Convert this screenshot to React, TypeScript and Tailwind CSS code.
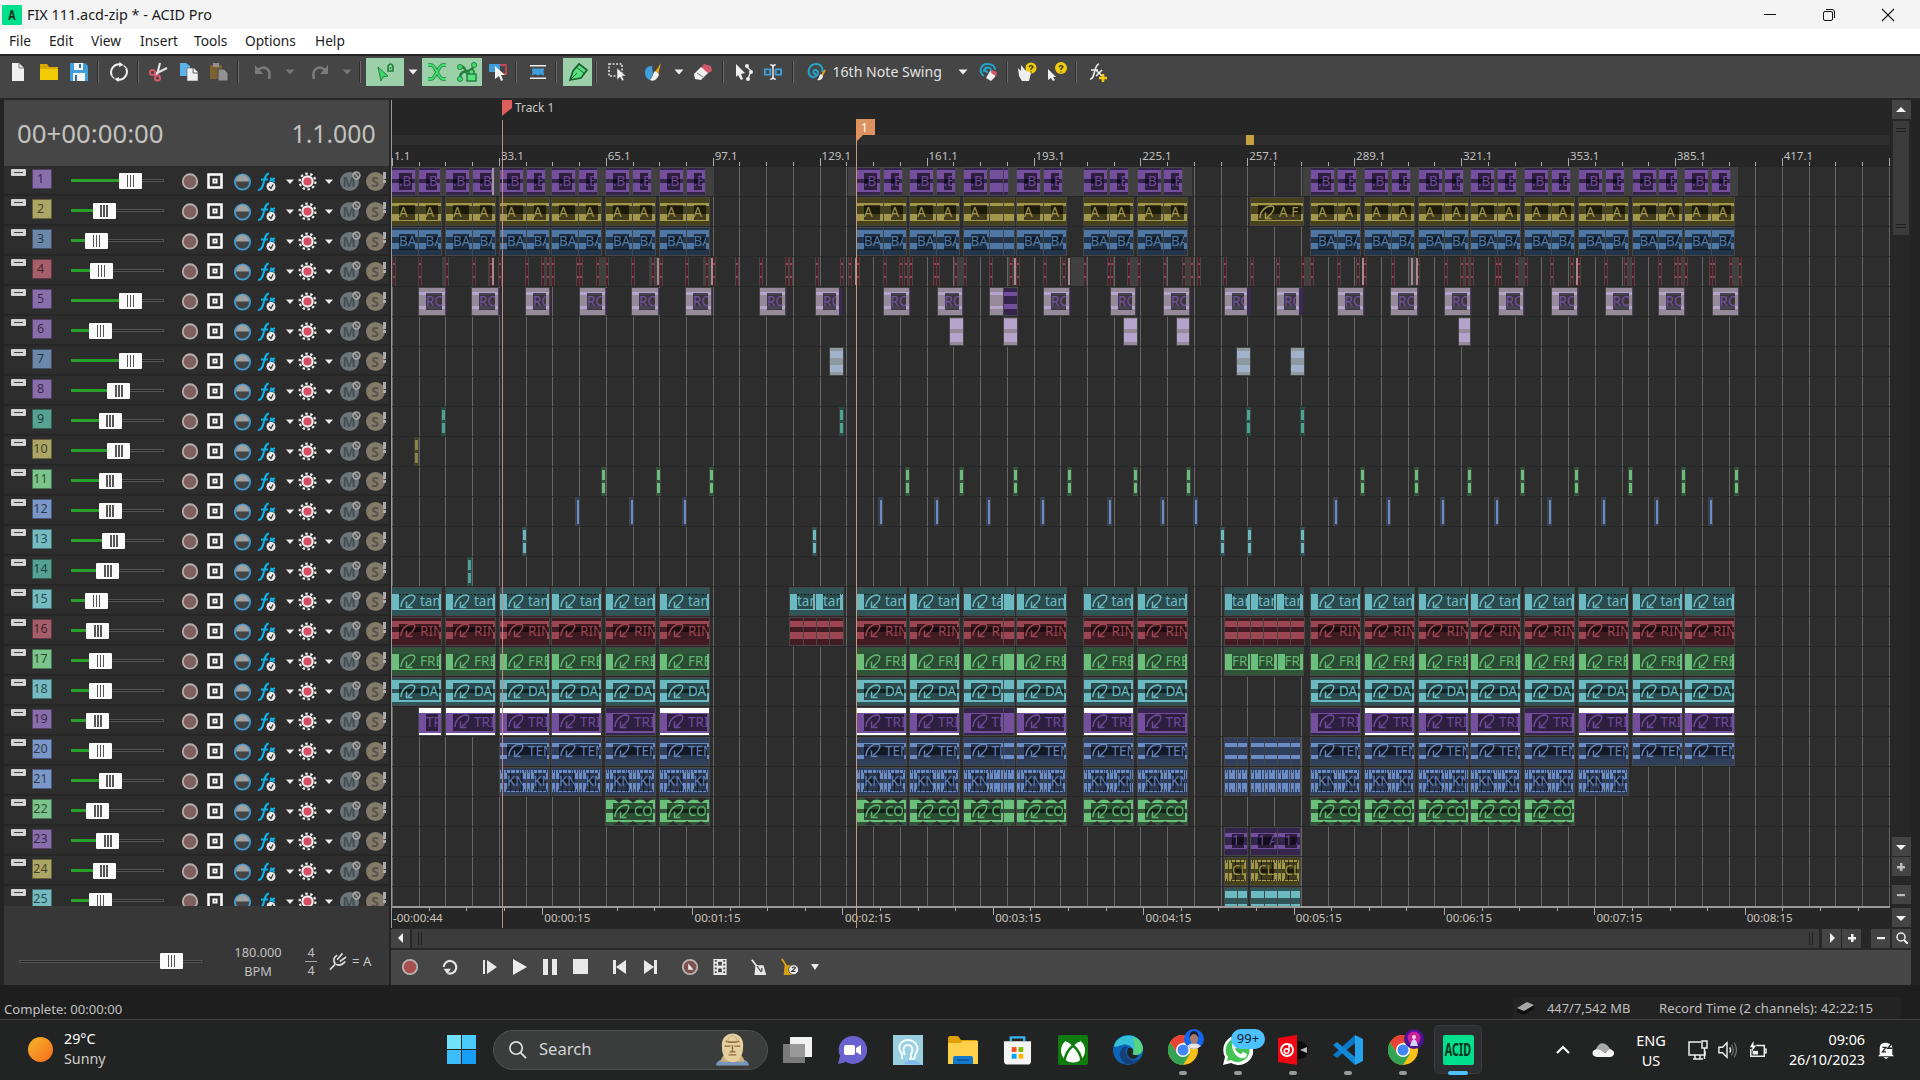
import React from "react";

type StripItem = { x: number; w: number; n: React.ReactNode };

/** Lays items out in one flex row; x values are positions along the row. */
function Strip({ items, className = "", start = 0 }: { items: StripItem[]; className?: string; start?: number }) {
  let end = start;
  return (
    <div className={"flex items-center " + className}>
      {items.map((it, i) => {
        const m = it.x - end;
        end = it.x + it.w;
        return (
          <div key={i} className="flex shrink-0 items-center justify-center" style={{ marginLeft: m, width: it.w }}>
            {it.n}
          </div>
        );
      })}
    </div>
  );
}

function Svg({ w = 20, h = 20, vb, children }: { w?: number; h?: number; vb?: string; children: React.ReactNode }) {
  return (
    <svg width={w} height={h} viewBox={vb ?? "0 0 20 20"} fill="none" className="shrink-0">
      {children}
    </svg>
  );
}

const at = (c: number, w: number, n: React.ReactNode): StripItem => ({ x: c - w / 2, w, n });

const Sep = () => <div className="h-[22px] w-[2px] border-l border-[#2c2c2c] bg-[#6a6a6a]" />;
const Down = ({ dim = false }: { dim?: boolean }) => (
  <Svg w={10} h={6} vb="0 0 10 6">
    <path d="M.5 .5h9L5 5.5z" fill={dim ? "#777" : "#eee"} />
  </Svg>
);

const toolbar: StripItem[] = [
  at(18, 20, <Svg><path d="M4 1h7l5 5v13H4z" fill="#f0f0f0" /><path d="M11 1v5h5" stroke="#777" /></Svg>),
  at(49, 20, <Svg><path d="M1 2h7l2 3h9v13H1z" fill="#d9a900" /><path d="M1 7h18v11H1z" fill="#f2cb05" /></Svg>),
  at(79, 20, <Svg><path d="M1 1h15l3 3v15H1z" fill="#3f9fdc" /><path d="M5 1h9v7H5zM4 11h12v8H4z" fill="#f4f4f4" /><path d="M10 2h2v4h-2zM6 13h2v6H6z" fill="#2c6fa0" /></Svg>),
  at(98, 2, <Sep />),
  at(119, 20, <Svg><path d="M2.800 13.500A8 8 0 0 1 12 2.500M17.200 6.500A8 8 0 0 1 8 17.500" stroke="#f0f0f0" strokeWidth="2" /><path d="M14.500 3.500a8 8 0 0 1 3 3M5.500 16.500a8 8 0 0 1-3-3" stroke="#f0f0f0" strokeWidth="1.400" /><path d="M10.500 0l4 3-4.500 2zM9.500 20l-4-3 4.500-2z" fill="#f0f0f0" /></Svg>),
  at(138, 2, <Sep />),
  at(158, 20, <Svg><path d="M12 1L9 13M19 6L7 12" stroke="#e4e4e4" strokeWidth="2.200" /><circle cx="4.500" cy="10.500" r="2.600" stroke="#d5596a" strokeWidth="2" /><circle cx="9.500" cy="16" r="2.600" stroke="#d5596a" strokeWidth="2" /></Svg>),
  at(189, 20, <Svg><path d="M1 1h6l4 3v10H1z" fill="#5bb3ea" /><path d="M8 6h7l4 4v9H8z" fill="#f0f0f0" stroke="#555" strokeWidth=".6" /><path d="M14 6v5h5" stroke="#666" /></Svg>),
  at(219, 20, <Svg><path d="M1 3h12v14H1z" fill="#7b6230" /><path d="M4 1h6v4H4z" fill="#909090" /><path d="M9 7h6l4 4v8H9z" fill="#929292" stroke="#454545" /></Svg>),
  at(238, 2, <Sep />),
  at(264, 20, <Svg><path d="M4 8c5-5 14-2 11 9" stroke="#7b7b7b" strokeWidth="2.600" /><path d="M1 3v9h8z" fill="#7b7b7b" /></Svg>),
  at(290, 12, <Down dim />),
  at(319, 20, <Svg><path d="M16 8C11 3 2 6 5 17" stroke="#7b7b7b" strokeWidth="2.600" /><path d="M19 3v9h-8z" fill="#7b7b7b" /></Svg>),
  at(347, 12, <Down dim />),
  at(360, 2, <Sep />),
  at(385, 38, <div className="flex h-[28px] w-full items-center justify-center bg-[#9bd0a8]"><Svg w={22}><path d="M3 5l10 9-5 1-2 4z" fill="#3fd66a" stroke="#23803d" /><path d="M13 9V4q2.500-4 5 0v5zM15.500 5v2" stroke="#23803d" strokeWidth="1.600" /></Svg></div>),
  at(413, 12, <Down />),
  at(452, 60, <div className="flex h-[28px] w-full items-center justify-around bg-[#9bd0a8]">
    <Svg w={22}><path d="M1 3h3c5 0 7 14 12 14h3M1 17h3c5 0 7-14 12-14h3" stroke="#23803d" strokeWidth="3.600" /><path d="M1 3h3c5 0 7 14 12 14h3M1 17h3c5 0 7-14 12-14h3" stroke="#3fe070" strokeWidth="1.800" /></Svg>
    <Svg w={22}><path d="M3 17C3 4 14 14 17 3M3 5c5-3 6 8 9 8" stroke="#23803d" strokeWidth="2.500" /><circle cx="3" cy="5" r="2.500" fill="#3fe070" stroke="#23803d" /><circle cx="17" cy="3" r="2.500" fill="#3fe070" stroke="#23803d" /><circle cx="3" cy="17" r="2.500" fill="#3fe070" stroke="#23803d" /><path d="M10 12h9v7h-9zM12 12V9q2.500-3 5 0v3" fill="#5be080" stroke="#23803d" strokeWidth="1.500" /></Svg>
  </div>),
  at(498, 20, <Svg><path d="M1 2h11v8H1z" fill="#3f9fdc" /><path d="M12 3h6v9h-7" stroke="#c04858" strokeWidth="1.800" /><path d="M7 4l10 9h-4l2 5-2 1-2-5-4 3z" fill="#f4f4f4" /></Svg>),
  at(516, 2, <Sep />),
  at(538, 18, <Svg w={18} h={18}><path d="M1 3h18M1 17h18" stroke="#eee" strokeWidth="1.800" /><path d="M3 6h14l-1 4 1 4-4-1.500-3 1.500-3-1.500L3 14l1-4z" fill="#3f9fdc" /></Svg>),
  at(556, 2, <Sep />),
  at(577.5, 29, <div className="flex h-[28px] w-full items-center justify-center bg-[#9bd0a8]"><Svg><path d="M2 18l3-9 6-7 8 6-6 8z" fill="#5be080" stroke="#17602d" strokeWidth="1.700" /><path d="M2 18l7-7M8 5l8 6" stroke="#17602d" /></Svg></div>),
  at(596, 2, <Sep />),
  at(617, 20, <Svg><path d="M2 2h13v12H2z" stroke="#ddd" strokeWidth="1.600" strokeDasharray="2 1.500" /><path d="M10 6l9 8h-4l2 4-2 1-2-4-3 3z" fill="#f4f4f4" stroke="#454545" strokeWidth=".5" /></Svg>),
  at(653, 20, <Svg><path d="M9 4c-9-1-9 12-2 14l3-6" fill="#3f9fdc" /><path d="M18 1l-3 12-3-3z" fill="#e0a21c" /><path d="M12 9l4 3c-1 5-5 8-9 6 3-3 3-7 5-9z" fill="#f0f0f0" /></Svg>),
  at(679, 12, <Down />),
  at(703, 20, <Svg><path d="M11 2l7 2 1 5-6 3-5-6z" fill="#d5596a" /><path d="M8 5l7 6-7 7-6-1-1-5z" fill="#f0f0f0" /><path d="M4 11l6 4" stroke="#777" /></Svg>),
  at(723, 2, <Sep />),
  at(744, 20, <Svg><path d="M2 2l9 9-4 1 2 5-2 1-3-5-2 2z" fill="#f0f0f0" /><path d="M12 4l5 5-3 8" stroke="#eee" strokeWidth="1.400" /><circle cx="13" cy="4" r="2" fill="#eee" /><circle cx="17" cy="10" r="2" fill="#eee" /><circle cx="14" cy="17" r="2" fill="#eee" /></Svg>),
  at(773, 18, <Svg w={18}><path d="M1 7h6v6H1zM13 7h6v6h-6z" stroke="#3f9fdc" strokeWidth="2" /><path d="M7 2q3 0 3 3 0-3 3-3M7 18q3 0 3-3 0 3 3 3M10 5v10" stroke="#eee" strokeWidth="1.600" /></Svg>),
  at(793, 2, <Sep />),
  at(817, 20, <Svg><path d="M9 12c-4 0-3-5 0-4 5 2 0 8-4 7C-1 12 2 2 9 2c6 0 7 5 6 8" stroke="#25a5cc" strokeWidth="2" /><path d="M18 8l-4 7" stroke="#e0a21c" strokeWidth="2" /><path d="M14 12l2 2c0 3-3 5-6 4 2-1 2-5 4-6z" fill="#eee" /></Svg>),
  { x: 832.5, w: 110, n: <span className="w-full whitespace-nowrap text-[14.100px] text-[#e2e2e2]">16th Note Swing</span> },
  at(963, 12, <Down />),
  at(988, 20, <Svg><path d="M10 10c-4 0-3-5 0-4M6 14C0 10 3 2 9 2c6 0 8 3 8 6M6 10c-1-6 8-6 7-1" stroke="#25a5cc" strokeWidth="1.900" /><path d="M12 9l6 2-1 4-4 4-5-3z" fill="#eee" /><path d="M14 8l5 2-1 4-5-3z" fill="#d5596a" /></Svg>),
  at(1006.5, 2, <Sep />),
  at(1027, 22, <Svg w={22}><circle cx="14" cy="6" r="5.500" fill="#f0cc10" /><path d="M12 5q2-3 4 0l-2 2v1M14 9.500v1" stroke="#4a4000" strokeWidth="1.500" /><path d="M1 6l3 3V3l4 5 6 3-2 8H5l-3-5z" fill="#eee" /></Svg>),
  at(1057, 22, <Svg w={22}><circle cx="14" cy="6" r="6" fill="#f0cc10" /><path d="M12 5q2-3 4 0l-2 2v1M14 9.500v1" stroke="#4a4000" strokeWidth="1.500" /><path d="M1 7l8 8H6l2 3-2 1-2-3-3 2z" fill="#eee" /></Svg>),
  at(1076, 2, <Sep />),
  at(1098, 20, <Svg><path d="M2 17c5 1 4-15 9-15M3 8h7M8 8l6 6M14 8l-6 6" stroke="#eee" strokeWidth="1.600" /><path d="M15 12v8M11 16h8" stroke="#f0cc10" strokeWidth="2.600" /></Svg>),
];

type Hue = { dark: string; bright: string; text: string };
const H: Record<string, Hue> = {
  purple: { dark: "#35244c", bright: "#744f9e", text: "#6d4b98" },
  yellow: { dark: "#47421c", bright: "#a0974a", text: "#a0974a" },
  blue: { dark: "#22354b", bright: "#4f77a3", text: "#4f77a3" },
  cyan: { dark: "#2f5558", bright: "#6bbac1", text: "#6bbac1" },
  red: { dark: "#431c23", bright: "#9c4553", text: "#9c4553" },
  green: { dark: "#305538", bright: "#6abf7b", text: "#62b573" },
  indigo: { dark: "#303f5b", bright: "#6b8bc4", text: "#6482b8" },
  lilac: { dark: "#95899a", bright: "#b5a3cb", text: "#7453a2" },
};

type ClipStyle = { hue: Hue; bands: [number, number][]; box: [number, number]; look?: "spiky" | "zigzag" | "dashed" };
const S: Record<string, ClipStyle> = {
  t1: { hue: H.purple, bands: [[4, 13], [17, 26]], box: [7, 24] },
  t2: { hue: H.yellow, bands: [[6.5, 10], [18, 24.5]], box: [9, 24] },
  t3: { hue: H.blue, bands: [[4, 10.5], [16.5, 23]], box: [8, 23.5] },
  t5: { hue: H.lilac, bands: [[6, 9], [20, 23]], box: [7, 23.5] },
  t15: { hue: H.cyan, bands: [[8, 24]], box: [8, 23], look: "dashed" },
  t16: { hue: H.red, bands: [[4.5, 11], [16, 23]], box: [7.5, 23] },
  t17: { hue: H.green, bands: [[8, 24]], box: [8, 23] },
  t18: { hue: H.cyan, bands: [[4, 12.5], [16.5, 25.5]], box: [7, 24] },
  t19: { hue: H.purple, bands: [[7, 26.5]], box: [8, 24.5] },
  t20: { hue: H.indigo, bands: [[7, 10.5], [19, 23]], box: [8, 22.5] },
  t21: { hue: H.indigo, bands: [[4, 13], [16.5, 25.5]], box: [7, 25], look: "spiky" },
  t22: { hue: H.green, bands: [[4, 12.5], [16.5, 25.5]], box: [7, 24], look: "zigzag" },
  t23: { hue: H.purple, bands: [[6.5, 10.5], [19, 23]], box: [8, 22] },
  t24: { hue: H.yellow, bands: [[4, 12.5], [17, 25]], box: [6, 24], look: "spiky" },
  t25: { hue: H.cyan, bands: [[5, 12], [17.5, 25]], box: [8, 23] },
};

const ORIGIN = 392;

function Clip({ x, w, s, label, loop, selected }: { x: number; w: number; s: ClipStyle; label?: string; loop?: boolean; selected?: boolean }) {
  const { hue } = s;
  return (
    <div className="absolute top-[1px] h-[29px] overflow-hidden border border-[#464646]" style={{ left: x - ORIGIN - 1, width: w + 2 }}>
      <svg width={w} height={27} viewBox={`0 2 ${w} 27`} className="absolute inset-0" shapeRendering="crispEdges">
        <rect x={0} y={2} width={w} height={27} fill={selected ? "#ffffff" : hue.dark} />
        {s.bands.map(([a, b], i) => (
          <rect key={i} x={0} y={a} width={w} height={b - a} fill={hue.bright} />
        ))}
        {s.look === "dashed" && <path d={`M7 8.500H${w}`} stroke="#10292b" strokeDasharray="1.500 2" />}
        {s.look === "spiky" && (
          <>
            <path d={`M1 5.500H${w}M1 24H${w}`} stroke={hue.dark} strokeWidth={3} strokeDasharray="1 4 1 3" />
            <path d={`M3 8.500H${w}M3 21H${w}`} stroke={hue.dark} strokeWidth={9} strokeDasharray="1 6 1 10" />
          </>
        )}
        {s.look === "zigzag" &&
          Array.from({ length: Math.ceil(w / 14) }, (_, i) => (
            <g key={i} shapeRendering="auto">
              <path d={`M${i * 14 + 8} 2h12l-6 5z`} fill="#2d2d2d" transform="translate(-1 0)" />
              <path d={`M${i * 14 + 7} 29l6-4 6 4z`} fill="#2d2d2d" />
            </g>
          ))}
      </svg>
      {label && (
        <div
          className="absolute left-[7px] flex items-center overflow-hidden bg-black/60"
          style={{ top: s.box[0] - 2, height: s.box[1] - s.box[0], right: loop ? 2 : 3 }}
        >
          {loop && (
            <svg width={19} height={16} viewBox="0 0 19 16" fill="none" className="shrink-0">
              <path d="M2 13C2 6 8 1 13 1c5 .5 3 6-4 11.500M7.500 7.500v6h6" stroke={hue.text} strokeWidth={1.500} />
            </svg>
          )}
          <span className={"whitespace-nowrap text-[13.500px] leading-none " + (loop ? "pl-[2px]" : "")} style={{ color: hue.text }}>
            {label}
          </span>
        </div>
      )}
    </div>
  );
}

const A = [392, 446, 500, 552, 606, 660];
const B = [857, 910, 963.5, 1017, 1083.5, 1137.5];
const C = [1311, 1365, 1418.5, 1471, 1525, 1579, 1632.5, 1685];

/** Long looped clips, one per sixteen-bar section. */
function Loops({ s, label, from = A, to = C, bare = [], narrow = false }: { s: ClipStyle; label: string; from?: number[]; to?: number[]; bare?: number[]; narrow?: boolean }) {
  const sel = s === S.t19;
  return (
    <>
      {[...from, ...B, ...to].map((x) => {
        const isSel = sel && !bare.includes(x);
        const w = 49;
        if (narrow)
          return x === 963.5 ? (
            <React.Fragment key={x}>
              <Clip x={x} w={26} s={s} label={label} /><Clip x={990} w={13} s={s} /><Clip x={1003.5} w={10} s={s} />
            </React.Fragment>
          ) : (
            <React.Fragment key={x}>
              <Clip x={x} w={26} s={s} label={label} /><Clip x={x + 26.500} w={22.500} s={s} label={label} />
            </React.Fragment>
          );
        return x === 963.5 ? (
          <React.Fragment key={x}>
            <Clip x={x} w={39} s={s} label={label} loop selected={isSel} /><Clip x={1003.5} w={10} s={s} selected={isSel} />
          </React.Fragment>
        ) : (
          <Clip key={x} x={x} w={w} s={s} label={label} loop selected={isSel} />
        );
      })}
    </>
  );
}

function Drums() {
  return (
    <>
      <Grey a={392} b={714} /><Grey a={848} b={1192} /><Grey a={1303} b={1738} />
      {[...A, ...B, ...C].map((x) => (
        <React.Fragment key={x}>
          <Clip x={x} w={23} s={S.t1} label=".BC" />
          {x === 963.5 ? (
            <><Clip x={990} w={13} s={S.t1} /><Clip x={1003.5} w={4} s={S.t1} /></>
          ) : (
            <Clip x={x + 26.5} w={x < 500 ? 21 : 18} s={S.t1} label=".B" />
          )}
        </React.Fragment>
      ))}
      <Bar x={492} w={2} c="#a293aa" />
    </>
  );
}

const Grey = ({ a, b }: { a: number; b: number }) => (
  <div className="absolute top-[1px] h-[29px] bg-[#404040]" style={{ left: a - ORIGIN, width: b - a }} />
);
const Bar = ({ x, w, c }: { x: number; w: number; c: string }) => (
  <div className="absolute top-[2px] h-[27px]" style={{ left: x - ORIGIN, width: w, background: c }} />
);

function Slivers({ xs, dark, bright, solid }: { xs: number[]; dark: string; bright: string; solid?: boolean }) {
  return (
    <>
      {xs.map((x) => (
        <div key={x} className="absolute top-[1px] flex h-[29px] w-[5px] flex-col items-center justify-center gap-[3px] border-x border-[#444]" style={{ left: x - ORIGIN - 2, background: dark }}>
          {solid ? (
            <div className="h-[24px] w-[2px]" style={{ background: bright }} />
          ) : (
            <>
              <div className="h-[10px] w-[3px]" style={{ background: bright }} />
              <div className="h-[10px] w-[3px]" style={{ background: bright }} />
            </>
          )}
        </div>
      ))}
    </>
  );
}

const hits = [393.5, 419.5, 446.5, 473.5, 491, 500, 527, 543, 548, 553, 578, 581, 598, 607, 633, 653, 660.5, 687, 707, 714, 737, 761, 787, 791, 817, 841.5, 850, 858, 884.5, 900.5, 905.5, 911, 935, 938, 956, 965, 991, 1010.5, 1018, 1044.5, 1064, 1084.5, 1109, 1112, 1129, 1138.5, 1164.5, 1184, 1192, 1198.5, 1225, 1252, 1278, 1303, 1312, 1338.5, 1357.5, 1365, 1392.5, 1418, 1446, 1462, 1467, 1472, 1497, 1499.5, 1516.5, 1526, 1552, 1572, 1579, 1606, 1626, 1633, 1660, 1675.5, 1680, 1686, 1711, 1713.5, 1731, 1740];
const flashes = [493, 658, 712, 856, 1015, 1069, 1363, 1412, 1416.5, 1577];
const gaps: [number, number][] = [[442, 447], [488, 494], [543, 552], [597, 606], [649, 657], [703, 711], [904, 910], [956, 964], [1008, 1014], [1071, 1083], [1128, 1137], [1183, 1191], [1303, 1311], [1409, 1417], [1461, 1470], [1517, 1526], [1627, 1633], [1676, 1685], [1731, 1740]];
const vox: [number, number][] = [[419, 26], [472, 26], [526, 23], [580, 25], [632, 25.5], [686, 25], [760, 25], [816, 23], [883.5, 25], [937.5, 24], [1044, 25], [1111, 24], [1164, 25], [1225, 21.5], [1277, 21.5], [1337.5, 25], [1391, 26], [1445, 25], [1498.5, 24.5], [1551.5, 25.5], [1605.5, 26], [1658.5, 25.5], [1712.5, 25.5]];
const k = 1.2245;
const sc = (a: number[]) => a.map((v) => Math.round(v * k));

function Lane({ n }: { n: number }) {
  switch (n) {
    case 1: return <Drums />;
    case 2: return <><Loops s={S.t2} label="A" narrow /><Clip x={1251} w={52} s={S.t2} label="A F" loop /></>;
    case 3: return <Loops s={S.t3} label="BA" narrow />;
    case 4: return (
      <>
        {gaps.map(([a, b]) => <Grey key={a} a={a} b={b} />)}
        {hits.map((x) => (
          <div key={x} className="absolute top-[1px] h-[29px] w-[4px] border-x border-[#454545] bg-[#4d1f28]" style={{ left: x - ORIGIN - 2 }}>
            <div className="mt-[6px] h-[2px] bg-[#9c4553]" /><div className="mt-[11px] h-[2px] bg-[#9c4553]" />
          </div>
        ))}
        {flashes.map((x) => <Bar key={x} x={x - 1} w={2} c="#a58b8f" />)}
      </>
    );
    case 5: return (
      <>
        {vox.map(([x, w]) => <React.Fragment key={x}><Bar x={x + w} w={2} c="#3b2853" /><Clip x={x} w={w} s={S.t5} label="RO" /></React.Fragment>)}
        <Bar x={839} w={3} c="#3b2853" /><Bar x={1247} w={4} c="#3b2853" /><Bar x={1299} w={4} c="#3b2853" />
        <Clip x={990} w={13} s={S.t5} /><Clip x={1003.5} w={13} s={{ ...S.t5, hue: H.purple, bands: [[6, 10], [18, 23]] }} />
      </>
    );
    case 6: return <>{[[950, 13], [1003.5, 13], [1123.5, 13], [1177, 11.5], [1458.5, 11.5]].map(([x, w]) => <Clip key={x} x={x} w={w} s={{ hue: H.lilac, bands: [[2.5, 13], [17, 26]], box: [0, 0] }} />)}</>;
    case 7: return <>{[830, 1237, 1291].map((x) => <Clip key={x} x={x} w={12.500} s={{ hue: { dark: "#8d989f", bright: "#9fb2ca", text: "" }, bands: [[5, 12], [19, 26]], box: [0, 0] }} />)}</>;
    case 9: return <Slivers xs={[443, 841, 1248, 1302]} dark="#1f4f49" bright="#45a695" />;
    case 10: return <Slivers xs={[416]} dark="#47421c" bright="#8b8345" />;
    case 11: return <Slivers xs={[...sc([492.5, 537, 580.5, 741, 785, 829, 873, 927, 970]), 1362, 1416, 1469, 1522, 1576, 1630, 1683, 1736]} dark="#305538" bright="#6abf7b" />;
    case 12: return <Slivers solid xs={[...sc([471.5, 515, 559, 719, 764, 807, 851, 906, 949, 976]), 1335, 1388, 1442, 1496, 1549, 1603, 1656, 1710]} dark="#303f5b" bright="#6b8bc4" />;
    case 13: return <Slivers xs={[524, 814, 1222, 1249, 1302]} dark="#2f5558" bright="#6bbac1" />;
    case 14: return <Slivers xs={[469]} dark="#1f4f49" bright="#45a695" />;
    case 15: return <><Loops s={S.t15} label="tam" />{[[790, 25.5], [816, 26.5], [1225, 25], [1251, 25.5], [1277, 26]].map(([x, w]) => <Clip key={x} x={x} w={w} s={S.t15} label="tam" />)}</>;
    case 16: return <><Loops s={S.t16} label="RIN" />{[790, 803.5, 816.5, 830, 1225, 1238, 1251, 1264, 1277.5, 1291].map((x) => <Clip key={x} x={x} w={12.500} s={S.t16} />)}</>;
    case 17: return <><Loops s={S.t17} label="FRE" />{[1225, 1251, 1277.5].map((x) => <Clip key={x} x={x} w={25.500} s={S.t17} label="FRE" />)}</>;
    case 18: return <Loops s={S.t18} label="DA" />;
    case 19: return <><Clip x={419} w={22} s={S.t19} label="TR" selected /><Loops s={S.t19} label="TRI" from={A.slice(1)} bare={[606, 963.5, 1137.5, 1311, 1525]} /></>;
    case 20: return <><Loops s={S.t20} label="TEN" from={A.slice(2)} /><Halves s={S.t20} /></>;
    case 21: return <><Loops s={S.t21} label="KN" from={A.slice(2)} to={C.slice(0, 6)} narrow /><Halves s={S.t21} /></>;
    case 22: return <Loops s={S.t22} label="CO" from={A.slice(4)} to={C.slice(0, 5)} />;
    case 23: return <Trio s={S.t23} label="1 A" />;
    case 24: return <Trio s={S.t24} label="CL" />;
    case 25: return <Halves s={S.t25} />;
    default: return null;
  }
}
const Halves = ({ s }: { s: ClipStyle }) => (
  <>{[[1225, 12], [1237.5, 9], [1251, 13], [1264.5, 12], [1277.5, 13], [1291, 9]].map(([x, w]) => <Clip key={x} x={x} w={w} s={s} />)}</>
);
const Trio = ({ s, label }: { s: ClipStyle; label: string }) => (
  <>{[[1225, 21.5], [1251, 25.5], [1277.5, 22.5]].map(([x, w]) => <Clip key={x} x={x} w={w} s={s} label={label} />)}</>
);

const P = "#8a6eac", Y = "#aca566", BL = "#6b88ab", R = "#a45f6b", T = "#55a292", G = "#7cc48c", CY = "#74bcc2", IN = "#7b97c8";
const tracks: [string, number][] = [
  [P, 106.5], [Y, 85], [BL, 79], [R, 83], [P, 106.5], [P, 82], [BL, 106.5], [P, 97], [T, 90], [Y, 97], [G, 90], [IN, 90], [CY, 93],
  [T, 88], [CY, 79], [R, 80], [G, 82], [CY, 82], [P, 80], [IN, 82], [IN, 90], [G, 80], [P, 88], [Y, 85], [CY, 82],
];

const Thumb = ({ className = "" }: { className?: string }) => (
  <div className={"flex h-[16px] w-[23px] shrink-0 items-center justify-center gap-[1.500px] rounded-[1px] bg-[#fafafa] " + className}>
    <div className="h-[12px] w-[1.500px] bg-[#555]" /><div className="h-[12px] w-[1.500px] bg-[#555]" /><div className="h-[12px] w-[1.500px] bg-[#555]" />
  </div>
);

function TrackRow({ n, color, pos }: { n: number; color: string; pos: number }) {
  const left = pos * k - 11.5 - 71;
  return (
    <div className="h-[30px] shrink-0 border-b-2 border-[#262626] bg-[#2d2d2d]">
      <Strip
        start={4}
        className="h-[30px]"
        items={[
          { x: 11, w: 15, n: <div className="mb-[17px] flex h-[7px] w-[15px] items-center rounded-[1px] bg-[#d4d4d4] px-[3px]"><div className="h-px w-full bg-[#444]" /></div> },
          { x: 32, w: 20, n: <div className="mb-[4px] flex h-[20px] w-full items-center justify-center rounded-[1px] border border-black/40 pr-[3px] text-[12.500px] text-black/65" style={{ background: color }}>{n}</div> },
          { x: 71, w: 93, n: <div className="mb-px flex h-[16px] w-full items-center"><div className="h-[3px] bg-[#27a127]" style={{ width: left }} /><Thumb /><div className="h-[3px] flex-1 border border-l-0 border-[#555] bg-[#222]" /></div> },
          at(190, 18, <Svg w={18} h={18}><circle cx="10" cy="10.500" r="8" fill="#80605f" stroke="#b5b0ae" strokeWidth="2" /></Svg>),
          at(215, 16, <div className="mb-px"><Svg w={16} h={16} vb="0 0 16 16"><path d="M1.500 1.500h13v13h-13z" fill="#333" stroke="#fff" strokeWidth="2.500" /><path d="M5.500 5.500h5v5h-5z" fill="#fff" /><path d="M7 7h2v2H7z" fill="#999" /></Svg></div>),
          at(242.5, 19, <Svg w={19} h={19}><circle cx="10" cy="10.500" r="8" fill="#444" stroke="#419bd0" strokeWidth="2" /><path d="M3 10a7 7 0 0 1 14 0z" fill="#a0a0a0" /></Svg>),
          at(266.5, 20, <Svg w={20} h={21}><path d="M1 18.500c7 1 5-17 11-16.500M4 8h7M13 7q3 0 4 4M18 7q-4 0-5 4" stroke="#0eb0e6" strokeWidth="2.100" /><circle cx="14" cy="15" r="4.500" fill="#e8e8e8" /><path d="M12 15l2 2 2-4" stroke="#333" strokeWidth="1.300" /></Svg>),
          at(290, 8, <Svg w={8} h={5} vb="0 0 10 6"><path d="M0 .5h10L5 6z" fill="#eee" /></Svg>),
          at(307.5, 19, <Svg w={19} h={20}><circle cx="10" cy="10.500" r="8.300" stroke="#eee" strokeWidth="2.400" strokeDasharray="2.600 2.614" /><circle cx="10" cy="10.500" r="5.400" fill="#d64c60" stroke="#eee" strokeWidth="2.200" /></Svg>),
          at(328.5, 8, <Svg w={8} h={5} vb="0 0 10 6"><path d="M0 .5h10L5 6z" fill="#eee" /></Svg>),
          at(349, 20, <div className="relative flex h-[19px] w-[19px] items-center justify-center rounded-full bg-[#6b767b] text-[14px] font-bold text-[#474f52]">M<div className="absolute -right-[2px] -top-[1px]"><Svg w={9} h={9} vb="0 0 9 9"><circle cx="4.500" cy="4.500" r="3.500" fill="#555" stroke="#aaa" strokeWidth="1.400" /><path d="M2 2l5 5" stroke="#aaa" strokeWidth="1.200" /></Svg></div></div>),
          at(375, 20, <div className="relative flex h-[19px] w-[19px] items-center justify-center rounded-full bg-[#827b6c] text-[14px] font-bold text-[#5a554a]">S<div className="absolute -right-[1px] top-0 h-[7px] w-[3px] bg-[#aaa]" /><div className="absolute -right-[1px] top-[8px] h-[3px] w-[3px] bg-[#aaa]" /></div>),
        ]}
      />
    </div>
  );
}

const grid = Array.from({ length: 57 }, (_, i) => i * 26.73);

function Timeline() {
  return (
    <div className="relative flex w-[1499px] flex-col overflow-hidden border-l border-[#9a9a9a] bg-[#262626]">
      <div className="h-[35px]" />
      <div className="h-[10px] bg-[#2e2e2e]" />
      <div className="relative h-[21px]">
        {grid.map((x, i) => <div key={i} className="absolute bottom-0 w-px bg-[#aaa]" style={{ left: x, height: i % 4 ? 4 : 8 }} />)}
        {Array.from({ length: 14 }, (_, i) => (
          <span key={i} className="absolute top-[3px] text-[11.500px] leading-[16px] text-[#c0c0c0]" style={{ left: i * 106.900 + 2 }}>{i * 32 + 1}.1</span>
        ))}
      </div>
      <div className="relative h-[740px] overflow-hidden bg-[#2d2d2d]">
        {grid.map((x, i) => <div key={i} className="absolute bottom-0 top-0 w-px bg-[#666]" style={{ left: x }} />)}
        {tracks.map((_, i) => (
          <div key={i} className="relative h-[30px] border-t border-[#262626]/80">
            <div className="absolute -top-px left-0 h-[30px] w-full"><Lane n={i + 1} /></div>
          </div>
        ))}
      </div>
      <div className="relative h-[22px] border-t-2 border-[#9a9a9a]">
        {Array.from({ length: 40 }, (_, i) => <div key={i} className="absolute top-0 w-px bg-[#aaa]" style={{ left: 37.6 * i - 0.8, height: i % 4 ? 3 : 7 }} />)}
        {["-00:00:44", "00:00:15", "00:01:15", "00:02:15", "00:03:15", "00:04:15", "00:05:15", "00:06:15", "00:07:15", "00:08:15"].map((t, i) => (
          <span key={t} className="absolute top-[2px] text-[11.600px] leading-[16px] text-[#c8c4bd]" style={{ left: i === 0 ? 1 : i * 150.3 + 2 }}>{t}</span>
        ))}
      </div>
      <div className="absolute bottom-0 left-[110px] top-[20px] w-px bg-[#c08a88]" />
      <div className="absolute left-[110px] top-0"><Svg w={10} h={16} vb="0 0 10 16"><path d="M0 0h10v8L0 16z" fill="#dd5f5c" /></Svg></div>
      <span className="absolute left-[123px] top-0 text-[11.900px] leading-[14px] text-[#c8c8c8]">Track 1</span>
      <div className="absolute bottom-0 left-[464px] top-[40px] w-px bg-[#c39a7c]" />
      <div className="absolute left-[464px] top-[19px]"><Svg w={19} h={23} vb="0 0 19 23"><path d="M0 0h19v16H7L0 23z" fill="#dd935f" /></Svg></div>
      <span className="absolute left-[469px] top-[19px] text-[12px] leading-[17px] text-white">1</span>
      <div className="absolute left-[854px] top-[35px] h-[10px] w-[8px] bg-[#c8a040]" />
    </div>
  );
}

const Btn = ({ d, dim }: { d: string; dim?: boolean }) => (
  <div className="flex h-[19px] w-[19px] shrink-0 items-center justify-center bg-[#444]">
    <Svg w={10} h={10} vb="0 0 10 10"><path d={d} fill={dim ? "#bbb" : "#f2f2f2"} /></Svg>
  </div>
);
const plus = "M4 1h2.500v3H9v2.500H6.500V9H4V6.500H1V4h3z";
const minus = "M1 4h8v2.200H1z";

const transport: StripItem[] = [
  at(410, 18, <Svg w={18} h={18}><circle cx="10" cy="10" r="8" fill="#a8504f" stroke="#b9b4b2" strokeWidth="2" /></Svg>),
  at(450, 18, <Svg w={18} h={18}><path d="M3 10a7 7 0 1 1 5 7" stroke="#e8e8e8" strokeWidth="2.400" /><path d="M3 12h8l-4 6z" fill="#e8e8e8" /></Svg>),
  at(490, 16, <Svg w={16} h={14} vb="0 0 16 14"><path d="M1 0h2v14H1zM5 0l10 7-10 7z" fill="#e8e8e8" /></Svg>),
  at(519.5, 14, <Svg w={14} h={16} vb="0 0 14 16"><path d="M0 0l14 8-14 8z" fill="#ececec" /></Svg>),
  at(550, 16, <Svg w={16} h={16} vb="0 0 16 16"><path d="M1 0h5v16H1zM10 0h5v16h-5z" fill="#e8e8e8" /></Svg>),
  at(580, 16, <div className="h-[15px] w-[15px] bg-[#e8e8e8]" />),
  at(620, 14, <Svg w={14} h={14} vb="0 0 14 14"><path d="M0 0h3v14H0zM13 0v14L3 7z" fill="#e8e8e8" /></Svg>),
  at(650, 14, <Svg w={14} h={14} vb="0 0 14 14"><path d="M11 0h3v14h-3zM1 0v14l10-7z" fill="#e8e8e8" /></Svg>),
  at(690, 18, <Svg w={18} h={18}><circle cx="10" cy="10" r="8" fill="#7d5150" stroke="#b9b4b2" strokeWidth="2" /><path d="M8 6v7h6z" fill="#e8e8e8" /></Svg>),
  at(720, 14, <Svg w={14} h={16} vb="0 0 14 17"><path d="M0 0h14v17H0z" fill="#e8e8e8" /><path d="M2.500 1v15M11.500 1v15" stroke="#464646" strokeWidth="2" strokeDasharray="2 2" /><path d="M5 3h4v4H5zM5 10h4v4H5z" fill="#464646" /></Svg>),
  at(759, 18, <Svg w={18} h={18}><path d="M6 8h9l3 11H5z" fill="#e8e8e8" /><path d="M2 2l10 13" stroke="#e8e8e8" strokeWidth="2" /><path d="M8 9l4 6q2-1 1-4" stroke="#555" strokeWidth="1.500" /></Svg>),
  at(790, 20, <Svg w={20} h={18}><path d="M4 8h8l2 11H3z" fill="#d9a012" /><path d="M1 1l9 14" stroke="#d9a012" strokeWidth="2" /><circle cx="14" cy="13" r="5.500" fill="#eee" stroke="#444" /><path d="M12 11q3-2 4 0l-4 4h4" stroke="#333" strokeWidth="1.300" /></Svg>),
  at(815, 8, <Svg w={8} h={6} vb="0 0 8 6"><path d="M0 0h8L4 6z" fill="#eee" /></Svg>),
];

const Chrome = ({ id }: { id: string }) => (
  <div className="relative">
    <Svg w={30} h={30} vb="0 0 30 30">
      <circle cx="15" cy="15" r="15" fill="#fbc116" />
      <path d="M2 7.500A15 15 0 0 1 28 7.500H15L9 18z" fill="#e94235" />
      <path d="M2 7.500A15 15 0 0 0 15 30l7-11-13-1z" fill="#34a353" />
      <circle cx="15" cy="15" r="7" fill="#fff" /><circle cx="15" cy="15" r="5.500" fill="#4285f4" />
    </Svg>
    <div className="absolute -right-[6px] -top-[6px]">
      <Svg w={20} h={20}>
        {id === "a" ? (
          <><circle cx="10" cy="10" r="10" fill="#1265ee" /><path d="M3 17q7-6 14 0-7 6-14 0z" fill="#e8e4e4" /><ellipse cx="10" cy="9" rx="4" ry="6" fill="#a97b6b" /><path d="M5.500 9q0-7 4.500-7t4.500 7q-2-4-4.500-4T5.500 9z" fill="#1b1b28" /></>
        ) : (
          <><circle cx="10" cy="10" r="10" fill="#4a1492" /><circle cx="10" cy="9" r="6.500" fill="#c8209a" /><path d="M6 17q4-14 8 0z" fill="#cfd6ff" /><circle cx="10" cy="8" r="2" fill="#f2d8e8" /></>
        )}
      </Svg>
    </div>
  </div>
);

const AcidIcon = () => (
  <div className="flex h-[30px] w-[31px] items-center justify-center rounded-[2px] bg-[#00e08d]">
    <span className="scale-x-[0.600] text-[18px] font-bold text-[#07301f]">ACID</span>
  </div>
);

const apps: StripItem[] = [
  at(461.5, 30, <div className="grid grid-cols-2 gap-[1px]"><div className="h-[14px] w-[14px] bg-[#6fe3fb]" /><div className="h-[14px] w-[14px] bg-[#49cbfb]" /><div className="h-[14px] w-[14px] bg-[#3cbcf8]" /><div className="h-[14px] w-[14px] bg-[#189ff5]" /></div>),
  { x: 493, w: 275, n: (
    <div className="flex h-[40px] w-full items-center rounded-full border border-[#505252] bg-[#3b3d3d] pl-[14px] pr-[15px]">
      <Svg w={19} h={19}><circle cx="8.500" cy="8.500" r="6.500" stroke="#ddd" strokeWidth="1.800" /><path d="M13 13l6 6" stroke="#ddd" strokeWidth="2" /></Svg>
      <span className="pl-[12px] text-[16.600px] text-[#d4d4d4]">Search</span>
      <div className="ml-auto mr-[2px]">
        <Svg w={35} h={33} vb="0 0 36 33"><path d="M1 33q1-7 11-7h12q10 0 11 7z" fill="#7796bd" /><path d="M6 29q0-6 6-8h12q6 2 6 8z" fill="#cdb07a" /><path d="M7 12C7-4 29-4 29 12q0 12-6 16-5 3-10 0Q7 24 7 12z" fill="#e6cf9f" /><path d="M10 13h6M20 13h6M18 12v7M14 22h8M11 8q7 2 14 0M15 19h6" stroke="#86683c" strokeWidth="1.400" /><path d="M13 9q0-6 5-7 5 1 5 7" stroke="#c9ab72" /></Svg>
      </div>
    </div>
  ) },
  at(798, 32, <Svg w={32} h={30} vb="0 0 32 30"><path d="M8 2h22v20H8z" fill="#f2f2f2" /><path d="M1 9h22v19H1z" fill="#8a8a8a" fillOpacity=".85" /></Svg>),
  at(852, 30, <Svg w={30} h={30} vb="0 0 30 30"><path d="M15 1a14 14 0 1 1-6 26L1 29l2-8A14 14 0 0 1 15 1z" fill="#6a63cf" /><rect x="7" y="10" width="11" height="10" rx="2" fill="#fff" /><path d="M19 13l5-3v10l-5-3z" fill="#fff" /></Svg>),
  at(908, 30, <Svg w={30} h={30} vb="0 0 30 30"><path d="M0 0h30v30H0z" fill="#99cfdf" /><path d="M10 29l9-6 11 7z" fill="#7fb9ec" /><path d="M9 24v-5C3 12 8 5 15 5s12 7 8 13l-2 6h-5M12 20c-3-6-1-10 3-10s6 5 3 9v4" stroke="#f2fbfd" strokeWidth="2" /></Svg>),
  at(963, 30, <Svg w={30} h={28} vb="0 0 30 28"><path d="M0 2q0-2 2-2h8l3 4h15q2 0 2 2v6H0z" fill="#e0a106" /><path d="M0 7h12l3-2h15v23H0z" fill="#ffd04a" /><path d="M5 28v-6q0-2 2-2h16q2 0 2 2v6z" fill="#1279cd" /><path d="M9 24h12" stroke="#0a549a" strokeWidth="1.600" /></Svg>),
  at(1017.5, 29, <Svg w={29} h={30} vb="0 0 30 30"><path d="M8 6V2h14v4" stroke="#3bb5f2" strokeWidth="2.400" /><path d="M1 6h28v20q0 4-4 4H5q-4 0-4-4z" fill="#f4f4f4" /><path d="M9 12h5v5H9z" fill="#f25022" /><path d="M16 12h5v5h-5z" fill="#7fba00" /><path d="M9 19h5v5H9z" fill="#00a4ef" /><path d="M16 19h5v5h-5z" fill="#ffb900" /></Svg>),
  at(1073, 30, <Svg w={30} h={30} vb="0 0 30 30"><rect width="30" height="30" rx="2" fill="#107c10" /><circle cx="15" cy="15.500" r="12" fill="#fff" /><path d="M7 5.500q4-.500 8 4 4-4.500 8-4l-3-3H10z" fill="#107c10" /><path d="M8 5.500q3 0 7 4.500 4-4.500 7-4.500M6.500 26C7 20 11 14 15 10.500 19 14 23 20 23.500 26" stroke="#107c10" strokeWidth="2.400" /></Svg>),
  at(1128, 30, <Svg w={30} h={30} vb="0 0 30 30"><circle cx="15" cy="15" r="15" fill="#0c65b8" /><path d="M1 12C3-3 28-4 30 13c0 7-7 8-11 6 4-6-4-11-10-9-4 1-7 2-8 2z" fill="#36c0d8" /><path d="M20 2q9 3 10 11c0 7-7 8-11 6 3-5 3-9 1-17z" fill="#62d86b" fillOpacity=".8" /><path d="M15 12q-5 2-1 9t13 3q-6 7-14 5-9-6-5-14 3-5 7-3z" fill="#153f78" /><path d="M15 13q4-1 5 2t-1 4q3 2 7 1-4 6-9 3t-2-10z" fill="#232425" /></Svg>),
  at(1183, 30, <Chrome id="a" />),
  at(1238, 30, <div className="relative"><Svg w={30} h={30} vb="0 0 30 30"><path d="M15 0a15 15 0 1 1-7 28l-8 2 2-8A15 15 0 0 1 15 0z" fill="#fff" /><path d="M15 3a12 12 0 1 1-7 22l-4 1 1-4A12 12 0 0 1 15 3z" fill="#43c354" /><path d="M9 9l3-1 2 4-2 2q2 4 6 5l2-2 4 2-1 3q-4 3-9-1t-5-12z" fill="#fff" /></Svg>
    <div className="absolute -right-[12px] -top-[6px] flex h-[20px] w-[34px] items-center justify-center rounded-full bg-[#4cc2ff] text-[13px] text-[#102030]">99+</div></div>),
  at(1292.5, 30, <Svg w={30} h={30} vb="0 0 30 30"><circle cx="21" cy="15" r="9" fill="#0c0c0c" /><path d="M22 15l7-3v6z" fill="#bbb" /><path d="M0 3l19-3v30L0 27z" fill="#f00613" /><circle cx="9" cy="15" r="6" stroke="#fff" strokeWidth="1.800" /><circle cx="8.500" cy="16" r="2.300" stroke="#fff" strokeWidth="1.500" /><path d="M11 16v-6l3 0" stroke="#fff" strokeWidth="1.500" /></Svg>),
  at(1348, 30, <Svg w={30} h={30} vb="0 0 30 30"><path d="M22 0v8L4 23l-4-3z" fill="#0b78c4" /><path d="M22 30v-8L4 7l-4 3z" fill="#1289d8" /><path d="M22 0l8 4v22l-8 4z" fill="#27a3ec" /></Svg>),
  at(1403, 30, <Chrome id="b" />),
  at(1458, 48, <div className="flex h-[49px] w-full items-center justify-center rounded-[5px] border border-[#3a3b3d] bg-[#2d2e31]"><AcidIcon /></div>),
];

const tray: StripItem[] = [
  at(1563, 16, <Svg w={16} h={10} vb="0 0 16 10"><path d="M2 8l6-6 6 6" stroke="#f4f4f4" strokeWidth="2.200" /></Svg>),
  at(1603, 22, <Svg w={22} h={14} vb="0 0 22 14"><path d="M4 6Q8-3 15 2l4 5-10 4-6-1z" fill="#a9a9a9" /><path d="M5 14q-6-1-4-6 3-3 7-1l5 3 5-4q5 2 4 5-1 3-4 3z" fill="#f4f4f4" /></Svg>),
  at(1651, 40, <div className="text-center text-[14.500px] leading-[20px] text-white">ENG<br />US</div>),
  at(1697.5, 20, <Svg w={20} h={20}><path d="M13 2H1v13h16v-4M5 19h10M7 15v4M12 15v4" stroke="#eee" strokeWidth="1.500" /><path d="M14 1h5v7h-5zM16.500 8v11" stroke="#eee" strokeWidth="1.500" /></Svg>),
  at(1727, 20, <Svg w={20} h={18}><path d="M1 7h4l5-5v16l-5-5H1z" stroke="#eee" strokeWidth="1.600" /><path d="M13 7q2 3 0 6" stroke="#eee" strokeWidth="1.500" /><path d="M15 4q4 6 0 12M18 2q5 8 0 16" stroke="#777" strokeWidth="1.300" /></Svg>),
  at(1758, 20, <Svg w={20} h={18}><path d="M8 5h9v12H2V9M17 9h2v4h-2" stroke="#eee" strokeWidth="1.600" /><path d="M4 11h6v4H4z" fill="#eee" /><path d="M5 0L1 7h3l-1 5 5-7H5z" fill="#fff" /></Svg>),
  { x: 1779, w: 86, n: <div className="w-full whitespace-nowrap text-right text-[14.300px] leading-[20px] text-white">09:06<br />26/10/2023</div> },
  at(1885.5, 18, <Svg w={18} h={20}><path d="M3 15V8q0-6 7-6t7 6v7l2 2H1z" fill="#fff" /><path d="M7 18h6l-3 2z" fill="#fff" /><path d="M6 7h4l-4 5h4M12 2h5l-5 6h5" stroke="#222" strokeWidth="1.500" /></Svg>),
];

export default function App() {
  return (
    <div className="flex h-[1080px] w-[1920px] flex-col overflow-hidden bg-[#232323] font-['Noto_Sans',sans-serif]">
      <header className="flex h-[29px] shrink-0 items-center bg-[#f3f3f3] text-[#1a1a1a]">
        <div className="ml-[2px] flex h-[20px] w-[20px] items-center justify-center rounded-[1px] bg-[#00e08d]"><span className="scale-x-75 text-[14px] font-bold text-[#07301f]">A</span></div>
        <span className="ml-[5px] text-[14.400px]">FIX 111.acd-zip * - ACID Pro</span>
        <div className="ml-auto flex items-center pr-[25px]">
          <Svg w={14} h={14} vb="0 0 14 14"><path d="M1 6.500h12" stroke="#111" /></Svg>
          <div className="ml-[45px]"><Svg w={14} h={14} vb="0 0 14 14"><rect x="1.500" y="3.500" width="9" height="9" rx="1.500" stroke="#111" /><path d="M4 1.500h6q2.500 0 2.500 2.500v6" stroke="#111" /></Svg></div>
          <div className="ml-[45px]"><Svg w={14} h={14} vb="0 0 14 14"><path d="M1 1l12 12M13 1L1 13" stroke="#111" strokeWidth="1.100" /></Svg></div>
        </div>
      </header>
      <nav className="flex h-[25px] shrink-0 items-center bg-white text-[13.700px] text-[#1c1c1c]">
        <span className="ml-[9px] w-[40px]">File</span><span className="w-[42px]">Edit</span><span className="w-[49px]">View</span><span className="w-[54px]">Insert</span><span className="w-[51px]">Tools</span><span className="w-[70px]">Options</span><span>Help</span>
      </nav>
      <div className="h-[2px] shrink-0 bg-[#252525]" />
      <Strip className="h-[43px] shrink-0 border-b border-[#2a2a2a] bg-[#454545] pb-[10px]" items={toolbar} />
      <div className="h-px shrink-0 bg-[#262626]" />

      <main className="flex h-[885px] shrink-0 pl-[4px]">
        <aside className="flex w-[385px] shrink-0 flex-col">
          <div className="flex h-[66px] shrink-0 items-center justify-between bg-[#464646] pl-[13px] pr-[13px] text-[25.800px] text-[#c2c2be]">
            <span>00+00:00:00</span><span className="origin-right scale-x-[0.960]">1.1.000</span>
          </div>
          <div className="flex h-[740px] shrink-0 flex-col overflow-hidden">
            {tracks.map(([c, p], i) => <TrackRow key={i} n={i + 1} color={c} pos={p} />)}
          </div>
          <div className="flex h-[79px] bg-[#373737] pt-[31px]">
            <div className="ml-[15px] flex h-[48px] w-[183px] items-center"><div className="h-[3px] w-[141px] border border-r-0 border-[#555] bg-[#222]" /><Thumb /><div className="h-[3px] flex-1 border border-l-0 border-[#555] bg-[#222]" /></div>
            <div className="ml-[28px] w-[56px] whitespace-nowrap pt-[6px] text-center text-[12.800px] leading-[19px] text-[#c0c0c0]">180.000<br />BPM</div>
            <div className="ml-[19px] flex w-[12px] flex-col items-center pt-[7px] text-[12.500px] leading-[17px] text-[#c0c0c0]"><span>4</span><div className="h-px w-full bg-[#aaa]" /><span>4</span></div>
            <div className="ml-[12px] flex h-[48px] items-center"><Svg w={18} h={19}><path d="M1 19l6-6M7 13q-4-6 2-10M8 13q5 3 10-3M9 8l6-7M12 10l7-5" stroke="#ddd" strokeWidth="1.800" /></Svg></div>
            <span className="ml-[5px] pt-[15px] text-[13.200px] leading-[19px] text-[#c8c8c8]">= A</span>
          </div>
        </aside>
        <div className="ml-[2px] flex w-[1520px] flex-col">
          <div className="flex h-[828px]">
            <Timeline />
            <div className="ml-[1px] flex w-[20px] flex-col items-center bg-[#272727]">
              <Btn d="M0 7h10L5 2z" />
              <div className="mt-[2px] flex h-[114px] w-[16px] flex-col justify-between bg-[#3b3b3b] px-[3px] py-[7px]"><div className="h-[4px] border-y border-[#1e1e1e]" /><div className="h-[4px] border-y border-[#1e1e1e]" /></div>
              <div className="mt-[602px]"><Btn d="M0 3h10L5 8z" /></div>
              <div className="mt-[1px]"><Btn d={plus} dim /></div>
              <div className="mt-[9px]"><Btn d={minus} dim /></div>
              <div className="mt-[4px]"><Btn d="M0 3h10L5 8z" /></div>
            </div>
          </div>
          <div className="flex h-[21px] items-center bg-[#272727] pb-px">
            <Btn d="M7 0v10L2 5z" />
            <div className="ml-[2px] flex h-[19px] w-[1407px] items-center justify-between bg-[#3c3c3c] px-[6px]"><div className="h-[13px] w-[4px] border-x border-[#1e1e1e]" /><div className="h-[13px] w-[4px] border-x border-[#1e1e1e]" /></div>
            <div className="ml-[3px]"><Btn d="M3 0v10l5-5z" /></div>
            <div className="ml-px"><Btn d={plus} /></div>
            <div className="ml-[10px]"><Btn d={minus} /></div>
            <div className="ml-[2px] flex h-[19px] w-[19px] items-center justify-center bg-[#444]"><Svg w={12} h={12} vb="0 0 12 12"><circle cx="5" cy="5" r="4" stroke="#eee" strokeWidth="1.500" /><path d="M8 8l4 4" stroke="#eee" strokeWidth="2" /></Svg></div>
          </div>
          <Strip start={391} className="h-[36px] border-t border-[#2a2a2a] bg-[#464646] pb-[2px]" items={transport} />
        </div>
      </main>

      <footer className="flex h-[35px] shrink-0 items-end border-b border-[#444] bg-[#1e1e1e] text-[13.100px] leading-[18px] text-[#c0c0c0]">
        <span className="ml-[4px] pb-px">Complete: 00:00:00</span>
        <div className="ml-auto mr-[19px] flex h-[22px] w-[388px] items-center bg-[#232323]">
          <div className="ml-[4px]"><Svg w={17} h={14} vb="0 0 17 14"><path d="M0 8l10-6 7 3v3l-10 6-7-3z" fill="#111" /><path d="M0 7l10-6 7 3-10 6z" fill="#a6a6a6" /></Svg></div>
          <span className="ml-[13px] w-[112px] text-[12.900px]">447/7,542 MB</span>
          <span className="whitespace-nowrap text-[13.200px]">Record Time (2 channels): 42:22:15</span>
        </div>
      </footer>

      <div className="flex h-[60px] shrink-0 items-start bg-[#222323]">
        <div className="flex h-[58px] w-[446px] items-center">
          <div className="ml-[28px] h-[25px] w-[25px] rounded-full bg-gradient-to-br from-[#f3b52a] to-[#f4691c]" />
          <div className="ml-[11px] text-[14.300px] leading-[20px] text-white">29°C<br /><span className="text-[#cfcfcf]">Sunny</span></div>
        </div>
        <div className="w-[1036px]">
          <Strip start={446} className="h-[59px]" items={apps} />
          <Strip start={446} className="-mt-[8px] h-[4px]" items={[...[1183, 1238, 1292.5, 1348, 1403].map((c) => at(c, 8, <div className="h-[4px] w-full rounded-full bg-[#999]" />)), at(1458, 20, <div className="h-[4px] w-full rounded-full bg-[#4cc2ff]" />)]} />
        </div>
        <Strip start={1482} className="h-[60px]" items={tray} />
      </div>
    </div>
  );
}
